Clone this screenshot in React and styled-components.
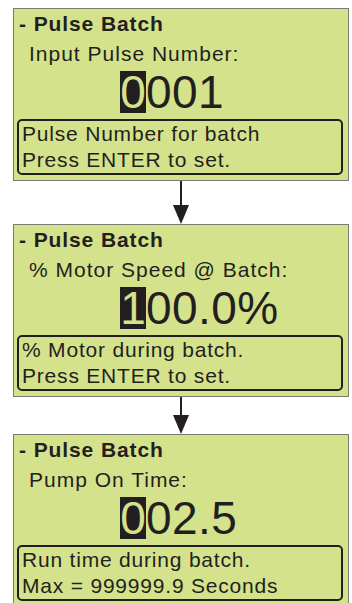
import React from 'react';
import styled, { createGlobalStyle } from 'styled-components';

const GlobalStyle = createGlobalStyle`
  html, body {
    margin: 0;
    padding: 0;
    background: #ffffff;
    overflow: hidden;
  }
  body {
    font-family: "Liberation Sans", Arial, sans-serif;
    color: #231f20;
  }
`;

// whole flow column
const Flow = styled.div`
  display: flex;
  flex-direction: column;
  width: 336px;
  margin: 8px 0 0 13px;
`;

// green LCD panel
const Screen = styled.div`
  box-sizing: border-box;
  height: 173px;
  background: #d4e28b;
  border: 1px solid #7a7a72;
  display: flex;
  flex-direction: column;
  flex-shrink: 0;
`;

const Title = styled.div`
  font-size: 21px;
  font-weight: bold;
  line-height: 30px;
  letter-spacing: 0.9px;
  padding-left: 5px;
`;

const Label = styled.div`
  font-size: 21px;
  line-height: 30px;
  letter-spacing: 1px;
  padding-left: 15px;
`;

const Value = styled.div`
  font-size: 46px;
  line-height: 42px;
  height: 42px;
  letter-spacing: 0.4px;
  margin-top: 2px;
  padding-left: 106px;
  white-space: nowrap;
`;

// blinking cursor digit
const Cursor = styled.span`
  display: inline-block;
  background: #231f20;
  color: #d4e28b;
  width: 26px;
  height: 42px;
  letter-spacing: 0;
  text-align: center;
  vertical-align: top;
`;

const Help = styled.div`
  box-sizing: border-box;
  margin: 6px 5px 0 3px;
  border: 2px solid #231f20;
  border-radius: 5px;
  padding-left: 3px;
  font-size: 21px;
  line-height: 26px;
  letter-spacing: 0.8px;
  white-space: nowrap;
`;

const ArrowWrap = styled.div`
  display: flex;
  justify-content: center;
  height: ${(p) => p.$h}px;
  flex-shrink: 0;
`;

const Arrow = ({ h }) => (
  <ArrowWrap $h={h}>
    <svg width="18" height={h} viewBox={`0 0 18 ${h}`}>
      <line x1="9" y1="0" x2="9" y2={h - 16} stroke="#231f20" strokeWidth="2" />
      <polygon points={`1,${h - 19} 17,${h - 19} 9,${h}`} fill="#231f20" />
    </svg>
  </ArrowWrap>
);

const screens = [
  {
    label: 'Input Pulse Number:',
    first: '0',
    rest: '001',
    help: ['Pulse Number for batch', 'Press ENTER to set.'],
  },
  {
    label: '% Motor Speed @ Batch:',
    first: '1',
    rest: '00.0%',
    help: ['% Motor during batch.', 'Press ENTER to set.'],
  },
  {
    label: 'Pump On Time:',
    first: '0',
    rest: '02.5',
    help: ['Run time during batch.', 'Max = 999999.9 Seconds'],
  },
];

const gaps = [43, 37];

export default function App() {
  return (
    <>
      <GlobalStyle />
      <Flow>
        {screens.map((s, i) => (
          <React.Fragment key={i}>
            <Screen>
              <Title>- Pulse Batch</Title>
              <Label>{s.label}</Label>
              <Value>
                <Cursor>{s.first}</Cursor>
                {s.rest}
              </Value>
              <Help>
                {s.help[0]}
                <br />
                {s.help[1]}
              </Help>
            </Screen>
            {i < screens.length - 1 && <Arrow h={gaps[i]} />}
          </React.Fragment>
        ))}
      </Flow>
    </>
  );
}
